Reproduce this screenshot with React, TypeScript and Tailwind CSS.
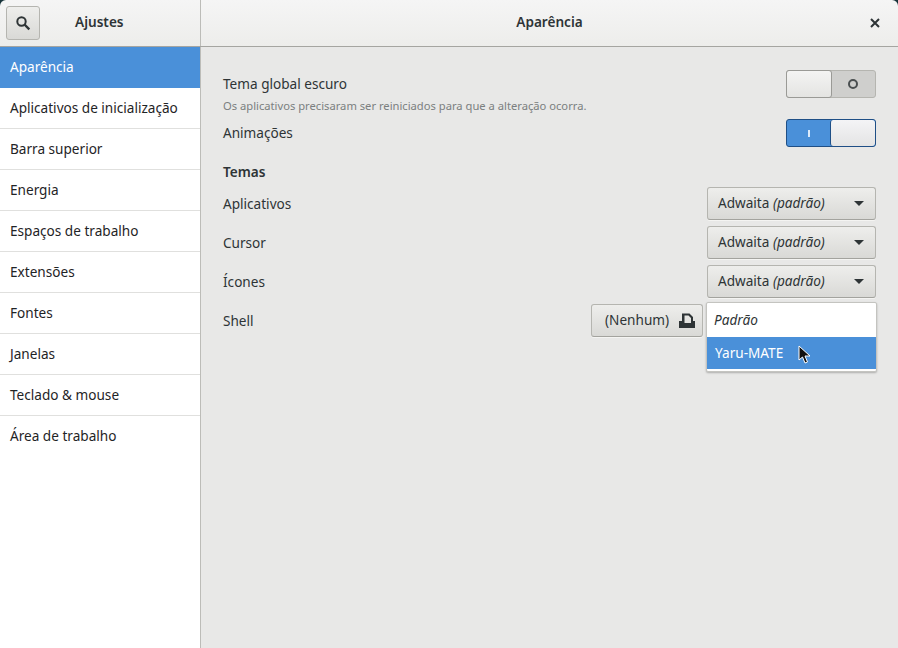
import React from "react";

const items = ["Aparência","Aplicativos de inicialização","Barra superior","Energia","Espaços de trabalho","Extensões","Fontes","Janelas","Teclado & mouse","Área de trabalho"];

function Btn({ className = "", children }: { className?: string; children: React.ReactNode }) {
  return (
    <div className={"h-[33px] flex items-center rounded-[3px] border border-[#b5b5b0] border-b-[#a3a39e] bg-gradient-to-b from-[#eeeeec] to-[#d9d9d6] text-[#2e3436] shadow-[0_1px_0_#f4f4f2] " + className}>
      {children}
    </div>
  );
}

function Combo() {
  return (
    <Btn className="w-[169px] pl-[10px] pr-[11px] justify-between">
      <span>Adwaita <i>(padrão)</i></span>
      <svg width="10" height="5" viewBox="0 0 10 5"><path d="M0 0h10L5 5z" fill="#2e3436" /></svg>
    </Btn>
  );
}

function Row({ label, children }: { label: string; children: React.ReactNode }) {
  return (
    <div className="flex items-center justify-between h-[33px] mb-[6px]">
      <span className="pt-[1px]">{label}</span>
      {children}
    </div>
  );
}

export default function App() {
  return (
    <div className="w-[898px] h-[648px] overflow-hidden flex flex-col bg-[#17343a] text-[13.6px] text-[#2e3436] font-['Noto_Sans',sans-serif]">
      <header className="h-[47px] shrink-0 flex border-b border-[#a5a5a1] bg-gradient-to-b from-[#f5f5f5] to-[#ededeb] rounded-t-[6px]">
        <div className="w-[201px] shrink-0 border-r border-[#bcbcb8] flex items-center pl-[6px] pb-[1px]">
          <div className="w-[34px] h-[34px] flex items-center justify-center rounded-[3px] border border-[#b5b5b0] bg-gradient-to-b from-[#eeeeec] to-[#d9d9d6]">
            <svg width="16" height="16" viewBox="0 0 16 16" fill="none" stroke="#2e3436" strokeWidth="2"><circle cx="6.5" cy="6.5" r="4.2" /><path d="M9.5 9.5l4.8 4.8" strokeWidth="2.4" /></svg>
          </div>
          <span className="ml-[35px] font-semibold">Ajustes</span>
        </div>
        <div className="flex-1 relative flex items-center justify-center pb-[1px] font-semibold">
          <span>Aparência</span>
          <svg className="absolute right-[18px] top-[18px]" width="10" height="10" viewBox="0 0 10 10" stroke="#2e3436" strokeWidth="2"><path d="M1 1l8 8M9 1l-8 8" /></svg>
        </div>
      </header>
      <div className="flex-1 flex min-h-0 bg-[#e8e8e7]">
        <nav className="w-[201px] shrink-0 bg-white border-r border-[#bcbcb8]">
          {items.map((t, i) => (
            <div key={t} className={"h-[41px] flex items-center pl-[10px] " + (i === 0 ? "pb-[1px] bg-[#4a90d9] text-white" : i === items.length - 1 ? "pb-[1px] text-[#1f2426]" : "border-b border-[#e0e0de] text-[#1f2426]")}>{t}</div>
          ))}
        </nav>
        <main className="flex-1 pl-[22px] pr-[22px] pt-[23px]">
          <div className="flex justify-between h-[49px]">
            <div className="pt-[3px]">
              <div className="leading-[22px]">Tema global escuro</div>
              <div className="text-[11.2px] leading-[21px] text-[#7b7f80]">Os aplicativos precisaram ser reiniciados para que a alteração ocorra.</div>
            </div>
            <div className="w-[90px] h-[28px] flex rounded-[3px] border border-[#b5b5b0] bg-[#cfcfcd]">
              <div className="w-[46px] -my-px -ml-px rounded-[3px] border border-[#9a9a96] bg-gradient-to-b from-[#f4f4f3] to-[#e4e4e2]" />
              <div className="flex-1 flex items-center justify-center pr-[1px]">
                <div className="w-[10px] h-[10px] rounded-full border-2 border-[#4a4f50]" />
              </div>
            </div>
          </div>
          <div className="flex justify-between items-start h-[41px]">
            <span className="leading-[28px]">Animações</span>
            <div className="w-[90px] h-[28px] flex rounded-[3px] border border-[#1f4f86] bg-[#4a90d9]">
              <div className="w-[43px] flex items-center justify-center">
                <div className="w-[2px] h-[7px] bg-[#dceafa]" />
              </div>
              <div className="flex-1 rounded-[3px] border-l border-[#1f4f86] bg-gradient-to-b from-[#f4f4f6] to-[#e4e4e4]" />
            </div>
          </div>
          <div className="font-semibold leading-[24px] mb-[3px]">Temas</div>
          <Row label="Aplicativos"><Combo /></Row>
          <Row label="Cursor"><Combo /></Row>
          <Row label="Ícones"><Combo /></Row>
          <div className="flex items-center h-[33px] relative">
            <span className="flex-1 pt-[1px]">Shell</span>
            <Btn className="w-[112px] pl-[13px] justify-between pr-[7px]">
              <span>(Nenhum)</span>
              <svg width="16" height="16" viewBox="0 0 16 16"><path d="M0 15V8H3V0.5H10.5L14 4V8H16V15ZM5.5 2.5H9.5L12 5V10H5.5Z" fill="#2e3436" fillRule="evenodd" /></svg>
            </Btn>
            <div className="w-[173px]" />
            <div className="absolute right-[-1px] top-[-2px] w-[171px] h-[70px] bg-white border border-[#c4c4c0] rounded-[2px] shadow-[0_1px_2px_rgba(0,0,0,0.25)]">
              <div className="h-[34px] flex items-center pl-[7px] pt-[1px] italic">Padrão</div>
              <div className="h-[32px] flex items-center pl-[8px] bg-[#4a90d9] text-white">Yaru-MATE</div>
              <svg className="absolute left-[91px] top-[42px]" width="13" height="19" viewBox="0 0 13 19"><path d="M1 1v14l3.5-3 2.5 6 2.5-1-2.5-6H12z" fill="#111" stroke="#fff" strokeWidth="1" /></svg>
            </div>
          </div>
        </main>
      </div>
    </div>
  );
}
